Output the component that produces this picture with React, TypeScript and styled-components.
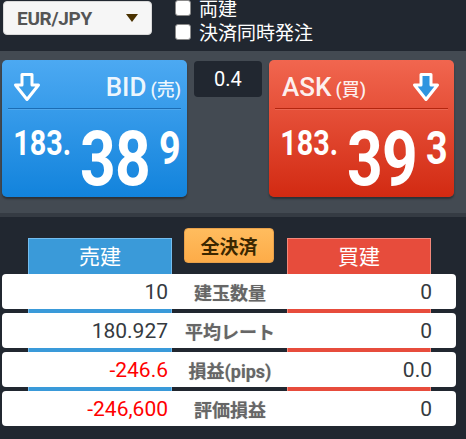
import React from 'react';
import styled, { createGlobalStyle } from 'styled-components';

const FONT = `Roboto, "Noto Sans CJK JP", "DejaVu Sans", sans-serif`;

const GlobalStyle = createGlobalStyle`
  html, body {
    margin: 0;
    padding: 0;
    background: #212730;
  }
  body {
    font-family: ${FONT};
  }
`;

const Screen = styled.div`
  width: 466px;
  height: 439px;
  overflow: hidden;
  background: #212730;
`;

const TopBar = styled.div`
  height: 51px;
  display: flex;
  align-items: flex-start;
  padding-left: 3px;
  overflow: hidden;
`;

const PairSelect = styled.div`
  width: 149px;
  height: 34px;
  margin-top: 1px;
  box-sizing: border-box;
  background: #f6f6f6;
  border: 1px solid #d9d9d9;
  border-radius: 4px;
  display: flex;
  align-items: center;
  justify-content: space-between;
  padding: 0 13px 0 13px;
  font-family: ${FONT};
  font-weight: 700;
  font-size: 19px;
  color: #555;
  letter-spacing: -0.3px;
`;

const Caret = styled.span`
  width: 0;
  height: 0;
  border-left: 6px solid transparent;
  border-right: 6px solid transparent;
  border-top: 8px solid #4a3200;
`;

const CheckList = styled.div`
  display: flex;
  flex-direction: column;
  margin-left: 23px;
  margin-top: -2px;
`;

const CheckRow = styled.label`
  display: flex;
  align-items: center;
  gap: 8px;
  height: 24px;
  color: #fff;
  font-family: ${FONT};
  font-size: 19px;
  line-height: 24px;
`;

const Box = styled.span`
  width: 16px;
  height: 16px;
  box-sizing: border-box;
  background: #fff;
  border: 1px solid #8a8a8a;
  border-radius: 3px;
  margin-top: -4px;
`;

const QuotePanel = styled.div`
  height: 166px;
  box-sizing: border-box;
  background: #434a52;
  border-bottom: 4px solid #353b43;
  padding: 9px 0 0 2px;
  display: grid;
  grid-template-columns: 185px 68px 185px;
  column-gap: 7px;
  align-items: start;
`;

const QuoteCard = styled.div<{ side: 'bid' | 'ask' }>`
  height: 137px;
  border-radius: 5px;
  background: ${p =>
    p.side === 'bid'
      ? 'linear-gradient(#4ca9f2, #1283dc)'
      : 'linear-gradient(#f1664f, #d22a12)'};
  box-shadow: 0 2px 2px rgba(0, 0, 0, 0.35);
  display: flex;
  flex-direction: column;
  color: #fff;
  --rule: ${p => (p.side === 'bid' ? '#1b6cb4' : '#b3250e')};
`;

const CardHead = styled.div<{ side: 'bid' | 'ask' }>`
  height: 48px;
  box-sizing: border-box;
  padding: 6px ${p => (p.side === 'bid' ? '6px 0 11px' : '14px 0 13px')};
  display: flex;
  align-items: center;
  justify-content: space-between;
`;

const SideLabel = styled.div`
  font-family: ${FONT};
  font-weight: 500;
  font-size: 26px;
  color: rgba(255, 255, 255, 0.92);
  display: flex;
  align-items: baseline;
  gap: 4px;

  small {
    font-size: 18px;
    font-weight: 500;
  }
`;

const Rule = styled.div`
  height: 1px;
  margin: 0 6px;
  background: var(--rule);
  box-shadow: 0 1px 0 rgba(255, 255, 255, 0.12);
`;

const PriceRow = styled.div`
  display: flex;
  justify-content: center;
  align-items: flex-start;
  padding: 12px 0 0 6px;
  transform: scaleX(0.82);
  font-family: ${FONT};
  font-weight: 700;
  line-height: 1;
  color: #fff;
`;

const PricePart = styled.span<{ size: number; lift: number; gap?: number }>`
  font-size: ${p => p.size}px;
  margin-top: ${p => p.lift}px;
  margin-left: ${p => p.gap ?? 0}px;
  letter-spacing: ${p => (p.size > 60 ? '-1px' : '0')};
`;

const Spread = styled.div`
  margin-top: 1px;
  height: 36px;
  border-radius: 4px;
  background: #212730;
  color: #fff;
  font-family: ${FONT};
  font-size: 20px;
  display: flex;
  align-items: center;
  justify-content: center;
`;

const Positions = styled.div`
  padding-top: 11px;
`;

const TabRow = styled.div`
  display: flex;
  align-items: flex-start;
`;

const SideTab = styled.div<{ side: 'sell' | 'buy'; offset: number }>`
  width: 144px;
  height: 160px;
  margin-top: 10px;
  margin-left: ${p => p.offset}px;
  box-sizing: border-box;
  background: ${p => (p.side === 'sell' ? '#3a9ad9' : '#e74c3c')};
  border: 1px solid ${p => (p.side === 'sell' ? '#74bdef' : '#f3887b')};
  border-bottom: none;
  color: #fff;
  font-family: ${FONT};
  font-size: 21px;
  text-align: center;
  padding-top: 5px;
  line-height: 26px;
`;

const CloseAll = styled.div`
  width: 90px;
  height: 35px;
  margin-left: 12px;
  box-sizing: border-box;
  border-radius: 4px;
  background: linear-gradient(#ffbc5e, #fdac48);
  border: 1px solid #e8a04a;
  color: #3b2700;
  font-family: ${FONT};
  font-weight: 700;
  font-size: 19px;
  display: flex;
  align-items: center;
  justify-content: center;
`;

const Rows = styled.div`
  position: relative;
  margin: -124px 10px 0 2px;
  display: flex;
  flex-direction: column;
  gap: 4px;
`;

const DataRow = styled.div`
  height: 35px;
  background: #fff;
  border-radius: 4px;
  display: grid;
  grid-template-columns: 166px 124px 1fr;
  align-items: center;
  font-family: ${FONT};
`;

const Value = styled.div<{ loss?: boolean; pad: number }>`
  text-align: right;
  padding-right: ${p => p.pad}px;
  font-size: 21px;
  color: ${p => (p.loss ? '#ff0000' : '#353a40')};
`;

const RowLabel = styled.div`
  text-align: center;
  font-size: 18px;
  font-weight: 700;
  color: #666;
  text-shadow: 0 0 1px rgba(0, 0, 0, 0.25);
  white-space: nowrap;
`;

const DownArrow = ({ fill }: { fill: string }) => (
  <svg width="28" height="30" viewBox="0 0 28 30">
    <path
      d="M9 2.5 H19 V13 H25.5 L14 27.5 L2.5 13 H9 Z"
      fill={fill}
      stroke="#fff"
      strokeWidth="3"
      strokeLinejoin="round"
    />
  </svg>
);

const Price = ({ big, pip }: { big: string; pip: string }) => (
  <PriceRow>
    <PricePart size={35} lift={5}>183.</PricePart>
    <PricePart size={76} lift={0} gap={11}>{big}</PricePart>
    <PricePart size={46} lift={4} gap={11}>{pip}</PricePart>
  </PriceRow>
);

const rows = [
  { left: '10', label: '建玉数量', right: '0' },
  { left: '180.927', label: '平均レート', right: '0' },
  { left: '-246.6', label: '損益(pips)', right: '0.0', loss: true },
  { left: '-246,600', label: '評価損益', right: '0', loss: true },
];

export default function App() {
  return (
    <Screen>
      <GlobalStyle />
      <TopBar>
        <PairSelect>
          EUR/JPY
          <Caret />
        </PairSelect>
        <CheckList>
          <CheckRow>
            <Box />
            両建
          </CheckRow>
          <CheckRow>
            <Box />
            決済同時発注
          </CheckRow>
        </CheckList>
      </TopBar>

      <QuotePanel>
        <QuoteCard side="bid">
          <CardHead side="bid">
            <DownArrow fill="#3a9ee8" />
            <SideLabel>
              BID<small>(売)</small>
            </SideLabel>
          </CardHead>
          <Rule />
          <Price big="38" pip="9" />
        </QuoteCard>
        <Spread>0.4</Spread>
        <QuoteCard side="ask">
          <CardHead side="ask">
            <SideLabel>
              ASK<small>(買)</small>
            </SideLabel>
            <DownArrow fill="#2f95e0" />
          </CardHead>
          <Rule />
          <Price big="39" pip="3" />
        </QuoteCard>
      </QuotePanel>

      <Positions>
        <TabRow>
          <SideTab side="sell" offset={28}>売建</SideTab>
          <CloseAll>全決済</CloseAll>
          <SideTab side="buy" offset={13}>買建</SideTab>
        </TabRow>
        <Rows>
          {rows.map(r => (
            <DataRow key={r.label}>
              <Value loss={r.loss} pad={0}>{r.left}</Value>
              <RowLabel>{r.label}</RowLabel>
              <Value pad={24}>{r.right}</Value>
            </DataRow>
          ))}
        </Rows>
      </Positions>
    </Screen>
  );
}
